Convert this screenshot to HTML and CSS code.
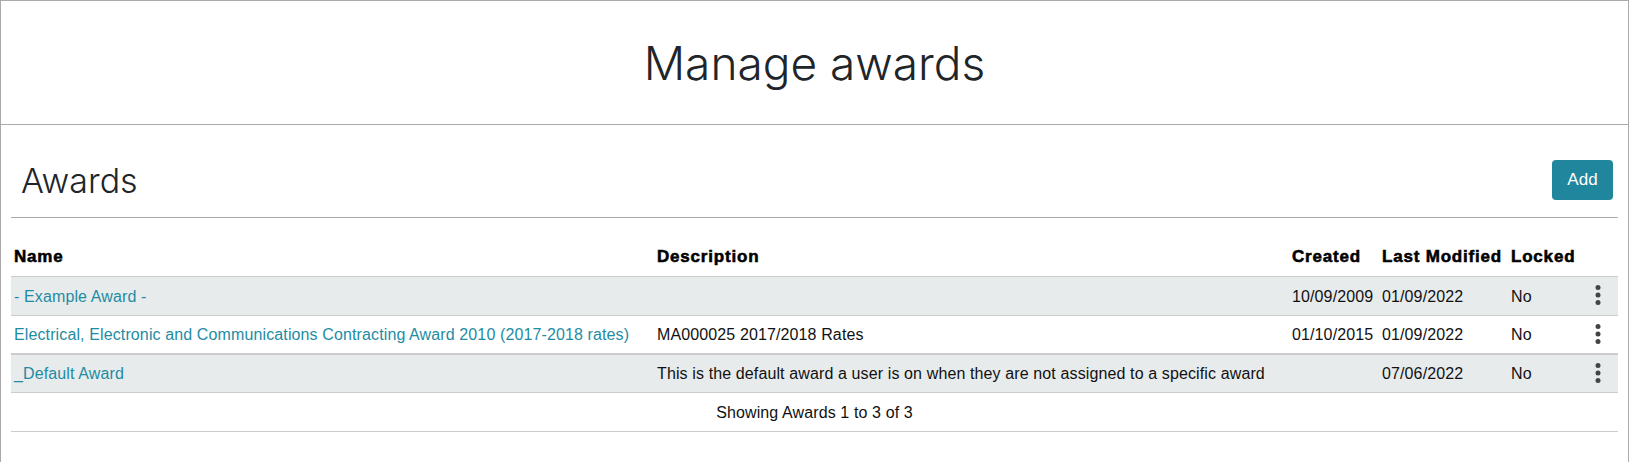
FILE: index.html
```html
<!doctype html>
<html lang="en">
<head>
	<meta charset="UTF-8">
	<title>Manage awards</title>
	<link rel="stylesheet" href="styles.css">
</head>
<body>
	<div class="page">
		<div class="page-top">
			<h1>Manage awards</h1>
		</div>
		<div class="cont">
			<div class="cont-head">
				<h2>Awards</h2>
				<a href="#" class="btn-add">Add</a>
			</div>
			<table class="awards">
				<colgroup>
					<col class="col-name">
					<col class="col-desc">
					<col class="col-created">
					<col class="col-modified">
					<col class="col-locked">
					<col>
				</colgroup>
				<thead>
					<tr>
						<th>Name</th>
						<th>Description</th>
						<th>Created</th>
						<th>Last Modified</th>
						<th>Locked</th>
						<th></th>
					</tr>
				</thead>
				<tbody>
					<tr class="odd">
						<td><a href="#">- Example Award -</a></td>
						<td></td>
						<td>10/09/2009</td>
						<td>01/09/2022</td>
						<td>No</td>
						<td class="more"><svg width="6" height="23" viewBox="0 0 6 23"><circle cx="3" cy="3.5" r="2.5"/><circle cx="3" cy="11" r="2.5"/><circle cx="3" cy="18.5" r="2.5"/></svg></td>
					</tr>
					<tr class="thick">
						<td><a href="#">Electrical, Electronic and Communications Contracting Award 2010 (2017-2018 rates)</a></td>
						<td>MA000025 2017/2018 Rates</td>
						<td>01/10/2015</td>
						<td>01/09/2022</td>
						<td>No</td>
						<td class="more"><svg width="6" height="23" viewBox="0 0 6 23"><circle cx="3" cy="3.5" r="2.5"/><circle cx="3" cy="11" r="2.5"/><circle cx="3" cy="18.5" r="2.5"/></svg></td>
					</tr>
					<tr class="odd last">
						<td><a href="#">_Default Award</a></td>
						<td>This is the default award a user is on when they are not assigned to a specific award</td>
						<td></td>
						<td>07/06/2022</td>
						<td>No</td>
						<td class="more"><svg width="6" height="23" viewBox="0 0 6 23"><circle cx="3" cy="3.5" r="2.5"/><circle cx="3" cy="11" r="2.5"/><circle cx="3" cy="18.5" r="2.5"/></svg></td>
					</tr>
				</tbody>
				<tfoot>
					<tr>
						<td colspan="6">Showing Awards 1 to 3 of 3</td>
					</tr>
				</tfoot>
			</table>
		</div>
	</div>
</body>
</html>
```

FILE: styles.css
```css
html,body{
	height: 100%;
}
body{
	margin: 0;
	font-family: "Liberation Sans", Arial, sans-serif;
	font-size: 16px;
	letter-spacing: 0.12px;
	color: #111;
	background: #fff;
}
a{
	text-decoration: none;
	color: #1e8ca3;
}
.page{
	box-sizing: border-box;
	min-height: 100%;
	border: 1px solid #aaa;
	border-bottom: 0;
}
.page-top{
	height: 123px;
	border-bottom: 1px solid #aaa;
	display: flex;
	align-items: center;
	justify-content: center;
}
h1,h2{
	margin: 0;
	font-family: Inter, "Open Sans", sans-serif;
	font-weight: 300;
	letter-spacing: 0;
	color: #212529;
}
h1{
	font-size: 46px;
}
h2{
	font-size: 34px;
}
.cont{
	padding: 0 10px;
}
.cont-head{
	height: 93px;
	box-sizing: border-box;
	padding: 35px 5px 17px 10px;
	border-bottom: 1px solid #aaa;
	display: flex;
	align-items: center;
	justify-content: space-between;
}
.btn-add{
	width: 61px;
	height: 40px;
	border-radius: 4px;
	background: #20869d;
	color: #fff;
	font-size: 17px;
	display: flex;
	align-items: center;
	justify-content: center;
}
.awards{
	width: 100%;
	margin-top: 20px;
	border-collapse: collapse;
	table-layout: fixed;
}
.col-name{
	width: 643px;
}
.col-desc{
	width: 635px;
}
.col-created{
	width: 90px;
}
.col-modified{
	width: 129px;
}
.col-locked{
	width: 77px;
}
.awards th{
	height: 38px;
	padding: 1px 3px 0;
	text-align: left;
	font-size: 17px;
	color: #000;
	border-bottom: 1px solid #ccc;
	box-sizing: border-box;
	-webkit-text-stroke: 0.55px #000;
	letter-spacing: 0.8px;
	white-space: nowrap;
}
.awards td{
	height: 39px;
	padding: 2px 3px 0;
	border-bottom: 1px solid #ccc;
	box-sizing: border-box;
	white-space: nowrap;
}
.awards .odd td{
	background: #e8ebec;
}
.awards .thick td{
	border-bottom-width: 2px;
}
.awards .last td{
	height: 38px;
}
.awards tfoot td{
	text-align: center;
}
.awards .more{
	padding: 0 10px 0 3px;
}
.more svg{
	display: block;
	margin: 0 auto;
	fill: #444;
}
```
